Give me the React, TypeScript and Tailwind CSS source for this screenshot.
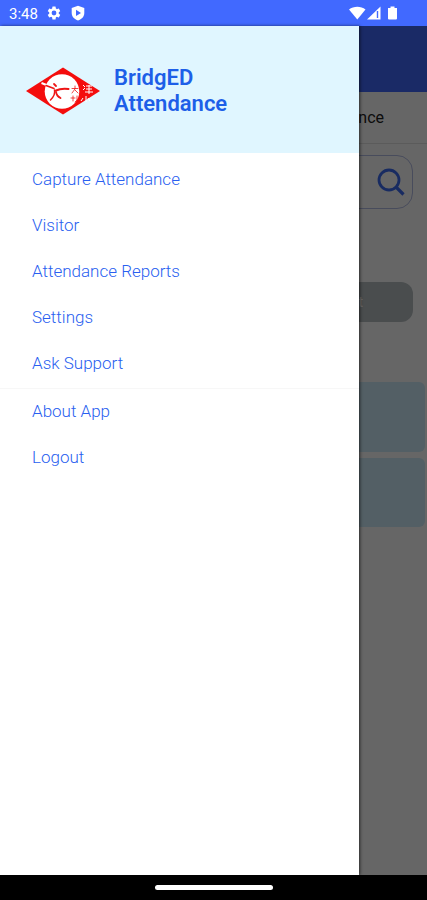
import React from "react";

const primaryLinks = ["Capture Attendance", "Visitor", "Attendance Reports", "Settings", "Ask Support"];
const secondaryLinks = ["About App", "Logout"];

function GearIcon() {
  return (
    <svg className="size-4" viewBox="0 0 24 24" fill="#fff" aria-hidden="true">
      <path d="M19.14 12.94c.04-.3.06-.61.06-.94s-.02-.64-.07-.94l2.03-1.58a.49.49 0 0 0 .12-.61l-1.92-3.32a.49.49 0 0 0-.59-.22l-2.39.96a7 7 0 0 0-1.62-.94l-.36-2.54a.48.48 0 0 0-.48-.41h-3.84a.47.47 0 0 0-.47.41l-.36 2.54c-.59.24-1.13.57-1.62.94l-2.39-.96a.48.48 0 0 0-.59.22L2.74 8.87a.47.47 0 0 0 .12.61l2.03 1.58c-.05.3-.09.63-.09.94s.02.64.07.94l-2.03 1.58a.49.49 0 0 0-.12.61l1.92 3.32c.12.22.37.29.59.22l2.39-.96c.5.38 1.03.7 1.62.94l.36 2.54c.05.24.24.41.48.41h3.84c.24 0 .44-.17.47-.41l.36-2.54c.59-.24 1.13-.56 1.62-.94l2.39.96c.22.08.47 0 .59-.22l1.92-3.32a.47.47 0 0 0-.12-.61zM12 15.6a3.6 3.6 0 1 1 0-7.2 3.6 3.6 0 0 1 0 7.2z" />
    </svg>
  );
}

function ShieldIcon() {
  return (
    <svg className="size-4" viewBox="0 0 16 16" aria-hidden="true">
      <path d="M8 .8 14.3 3v5c0 3.600-2.700 6.300-6.300 7.500C4.400 14.300 1.700 11.600 1.700 8V3z" fill="#fff" />
      <path d="M6 4.800 11 7.900 6 11z" fill="#4169ff" />
    </svg>
  );
}

function StatusIcons() {
  return (
    <svg className="h-4 w-[50px]" viewBox="0 0 50 16" fill="#fff" aria-hidden="true">
      <path d="M0 4.500C4.600.8 12 .8 16.500 4.500L8.300 14.500z" />
      <path d="M31.500 1.500v13H18z" />
      <path d="M27.800 6h1.400v7h-1.400z" fill="#4169ff" />
      <path d="M39 3h2.500V1.500h4V3H48v10.500a1 1 0 0 1-1 1h-7a1 1 0 0 1-1-1z" />
    </svg>
  );
}

function SchoolLogo() {
  return (
    <svg className="h-12 w-[76px] shrink-0" viewBox="0 0 76 48" fill="none" role="img" aria-label="School logo">
      <path d="M1 24 38 .5 75 24 38 47.500z" fill="#f40d0d" />
      <circle cx="37" cy="24.500" r="17.300" fill="#fff" />
      <path d="M16.500 16 29 21" stroke="#fff" strokeWidth="2" />
      <g stroke="#ee1515" strokeLinecap="round">
        <path d="M21 18.500l8 3" strokeWidth="1.500" />
        <path d="M29 17l2 2" strokeWidth="1.800" />
        <path d="M31 23.500c4-2 8-2 12.500-1.500" strokeWidth="2" />
        <path d="M29.500 23c1 4-1 7-4 10" strokeWidth="1.500" />
        <path d="M31 25c.5 3 2.500 5 4.500 6" strokeWidth="1.800" />
        <path d="M47 21.500h6m-3-2.500v3l-3 4m3-3 3 3M46 31h4m-2-2v5m4-5v4l-2 2" strokeWidth=".8" />
      </g>
      <g stroke="#fff" strokeWidth="1">
        <path d="M58 18l2 2m-2 3 2-2m1-2h6m-6 3h6m-7 3h8m-4-7v9" />
        <path d="M61 29v6m-3-4-2 3m7-3 2 3" />
      </g>
    </svg>
  );
}

export default function App() {
  return (
    <div className="flex min-h-screen flex-col overflow-hidden bg-white font-['Roboto',sans-serif]">
      <div className="flex h-[26px] shrink-0 items-center bg-[#4169ff] pl-[9px] pr-7 text-white">
        <time className="pt-0.5 text-[15px] leading-5">3:48</time>
        <div className="ml-2 flex items-center gap-2">
          <GearIcon />
          <ShieldIcon />
        </div>
        <div className="ml-auto">
          <StatusIcons />
        </div>
      </div>

      <div className="relative flex flex-1 flex-col">
        <main className="flex flex-1 flex-col" aria-hidden="true">
          <div className="h-[66px] bg-[#4169ff]" />
          <div className="flex h-[52px] items-center justify-end border-b border-[#e4e4e4] pr-[43px] text-base text-[#222]">nce</div>
          <div className="mx-3.5 mt-[11px] flex h-[54px] items-center justify-end rounded-2xl border border-[#b4bde6] pr-[7px]">
            <svg className="size-7" viewBox="0 0 28 28" fill="none" stroke="#3d6df2" aria-hidden="true">
              <circle cx="12" cy="12" r="10" strokeWidth="2.800" />
              <path d="m19 19 7.500 7.500" strokeWidth="3.200" />
            </svg>
          </div>
          <div className="mx-3.5 mt-[73px] flex h-10 items-center justify-end rounded-xl bg-[#b9c0c3] pr-[50px] text-sm text-white">t</div>
          <div className="mx-0.5 mt-[60px] flex flex-col gap-1.5">
            <div className="h-[70px] rounded-md bg-[#cfeefc]" />
            <div className="h-[69px] rounded-md bg-[#cfeefc]" />
          </div>
        </main>

        <div className="absolute inset-0 bg-black/60" />

        <aside className="absolute inset-y-0 left-0 flex w-[84%] flex-col bg-white shadow-[1px_0_3px_rgba(0,0,0,0.6)]">
          <header className="flex h-[127px] items-center gap-[13px] bg-[#e0f6ff] pl-[25px] pt-0.5">
            <SchoolLogo />
            <h1 className="w-36 text-[22px] font-semibold leading-[26px] text-[#1d5fe8]">BridgED Attendance</h1>
          </header>
          <nav className="flex flex-col pt-1 text-[17px] font-light text-[#2a5ff0]">
            {primaryLinks.map((label) => (
              <a key={label} href="#" className="flex h-[46px] items-center pl-8">{label}</a>
            ))}
            <div className="mt-px flex flex-col border-t border-[#f7f7f7]">
              {secondaryLinks.map((label) => (
                <a key={label} href="#" className="flex h-[46px] items-center pl-8">{label}</a>
              ))}
            </div>
          </nav>
        </aside>
      </div>

      <div className="flex h-[25px] shrink-0 items-center justify-center bg-black">
        <div className="h-[5px] w-[118px] rounded-full bg-white" />
      </div>
    </div>
  );
}
